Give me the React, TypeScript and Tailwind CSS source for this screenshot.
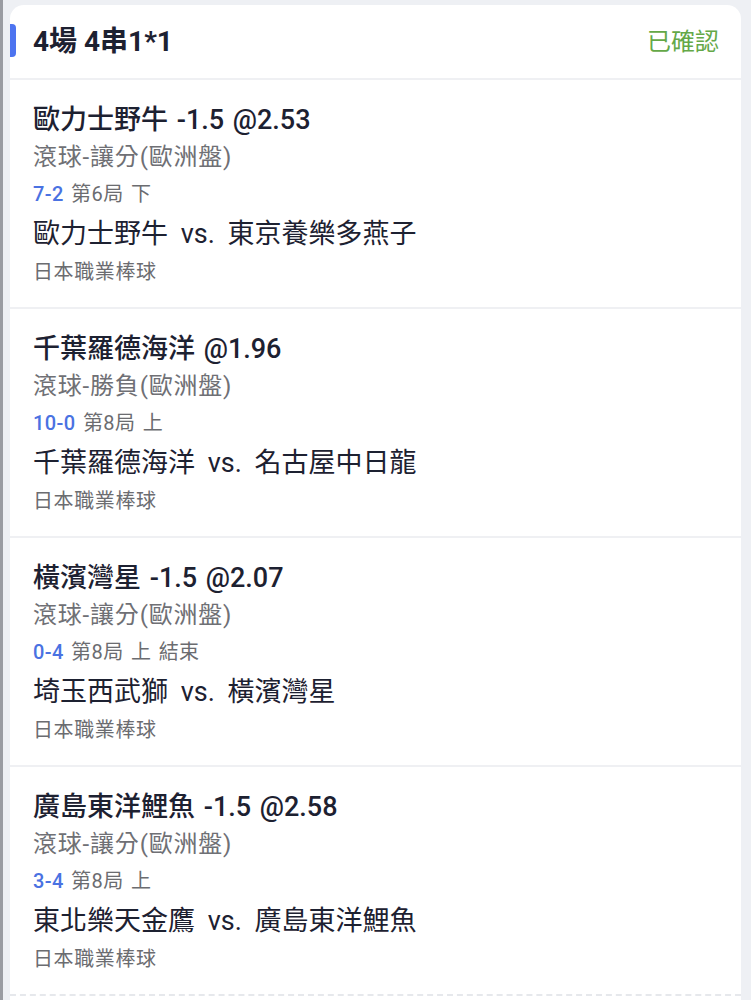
import React from "react";

type Bet = {
  pick: string;
  market: string;
  score: string;
  period: string;
  match: string;
  league: string;
};

const bets: Bet[] = [
  {
    pick: "歐力士野牛 -1.5 @2.53",
    market: "滾球-讓分(歐洲盤)",
    score: "7-2",
    period: "第6局 下",
    match: "歐力士野牛 vs. 東京養樂多燕子",
    league: "日本職業棒球",
  },
  {
    pick: "千葉羅德海洋 @1.96",
    market: "滾球-勝負(歐洲盤)",
    score: "10-0",
    period: "第8局 上",
    match: "千葉羅德海洋 vs. 名古屋中日龍",
    league: "日本職業棒球",
  },
  {
    pick: "橫濱灣星 -1.5 @2.07",
    market: "滾球-讓分(歐洲盤)",
    score: "0-4",
    period: "第8局 上 結束",
    match: "埼玉西武獅 vs. 橫濱灣星",
    league: "日本職業棒球",
  },
  {
    pick: "廣島東洋鯉魚 -1.5 @2.58",
    market: "滾球-讓分(歐洲盤)",
    score: "3-4",
    period: "第8局 上",
    match: "東北樂天金鷹 vs. 廣島東洋鯉魚",
    league: "日本職業棒球",
  },
];

const BetRow: React.FC<{ bet: Bet; last: boolean }> = ({ bet, last }) => {
  return (
    <div
      className={
        last
          ? "h-[229px] pt-[22px] pl-[23px] border-b-2 border-dashed border-[#e6e8ec]"
          : "h-[229px] pt-[22px] pl-[23px] border-b-2 border-[#eff0f3]"
      }
    >
      <div className="h-[36px] leading-[36px] text-[27px] font-medium text-[#1d2131] [word-spacing:2px]">
        {bet.pick}
      </div>
      <div className="h-[38px] leading-[38px] text-[24px] tracking-[0.8px] text-[#6f7075]">
        {bet.market}
      </div>
      <div className="h-[36px] leading-[36px] text-[20px] tracking-[0.4px] text-[#6b6c70] [word-spacing:2px]">
        <span className="font-medium text-[#4a72e2]">{bet.score}</span>{" "}
        {bet.period}
      </div>
      <div className="h-[44px] leading-[44px] text-[27px] text-[#1d2131] [word-spacing:6px]">
        {bet.match}
      </div>
      <div className="h-[32px] leading-[32px] text-[20px] tracking-[0.6px] text-[#6b6c70]">
        {bet.league}
      </div>
    </div>
  );
};

export default function App() {
  return (
    <div
      className="flex w-[751px] h-[1000px] overflow-hidden bg-[#eef0f4]"
      style={{ fontFamily: 'Roboto, "Noto Sans CJK TC", sans-serif' }}
    >
      <div className="w-[3px] shrink-0 bg-[#9a9ca2]" />
      <div className="ml-[7px] mr-[10px] mt-[5px] flex-1 rounded-t-[14px] bg-white">
        <div className="relative flex h-[75px] items-center justify-between border-b-2 border-[#eff0f3] pl-[23px] pr-[22px]">
          <div className="absolute left-0 top-[19px] h-[33px] w-[6px] rounded-r-[4px] bg-[#4d74f0]" />
          <div className="text-[28px] font-bold text-[#1d2131]">4場 4串1*1</div>
          <div className="text-[24px] text-[#64a847]">已確認</div>
        </div>
        {bets.map((bet, i) => (
          <BetRow key={i} bet={bet} last={i === bets.length - 1} />
        ))}
      </div>
    </div>
  );
}
